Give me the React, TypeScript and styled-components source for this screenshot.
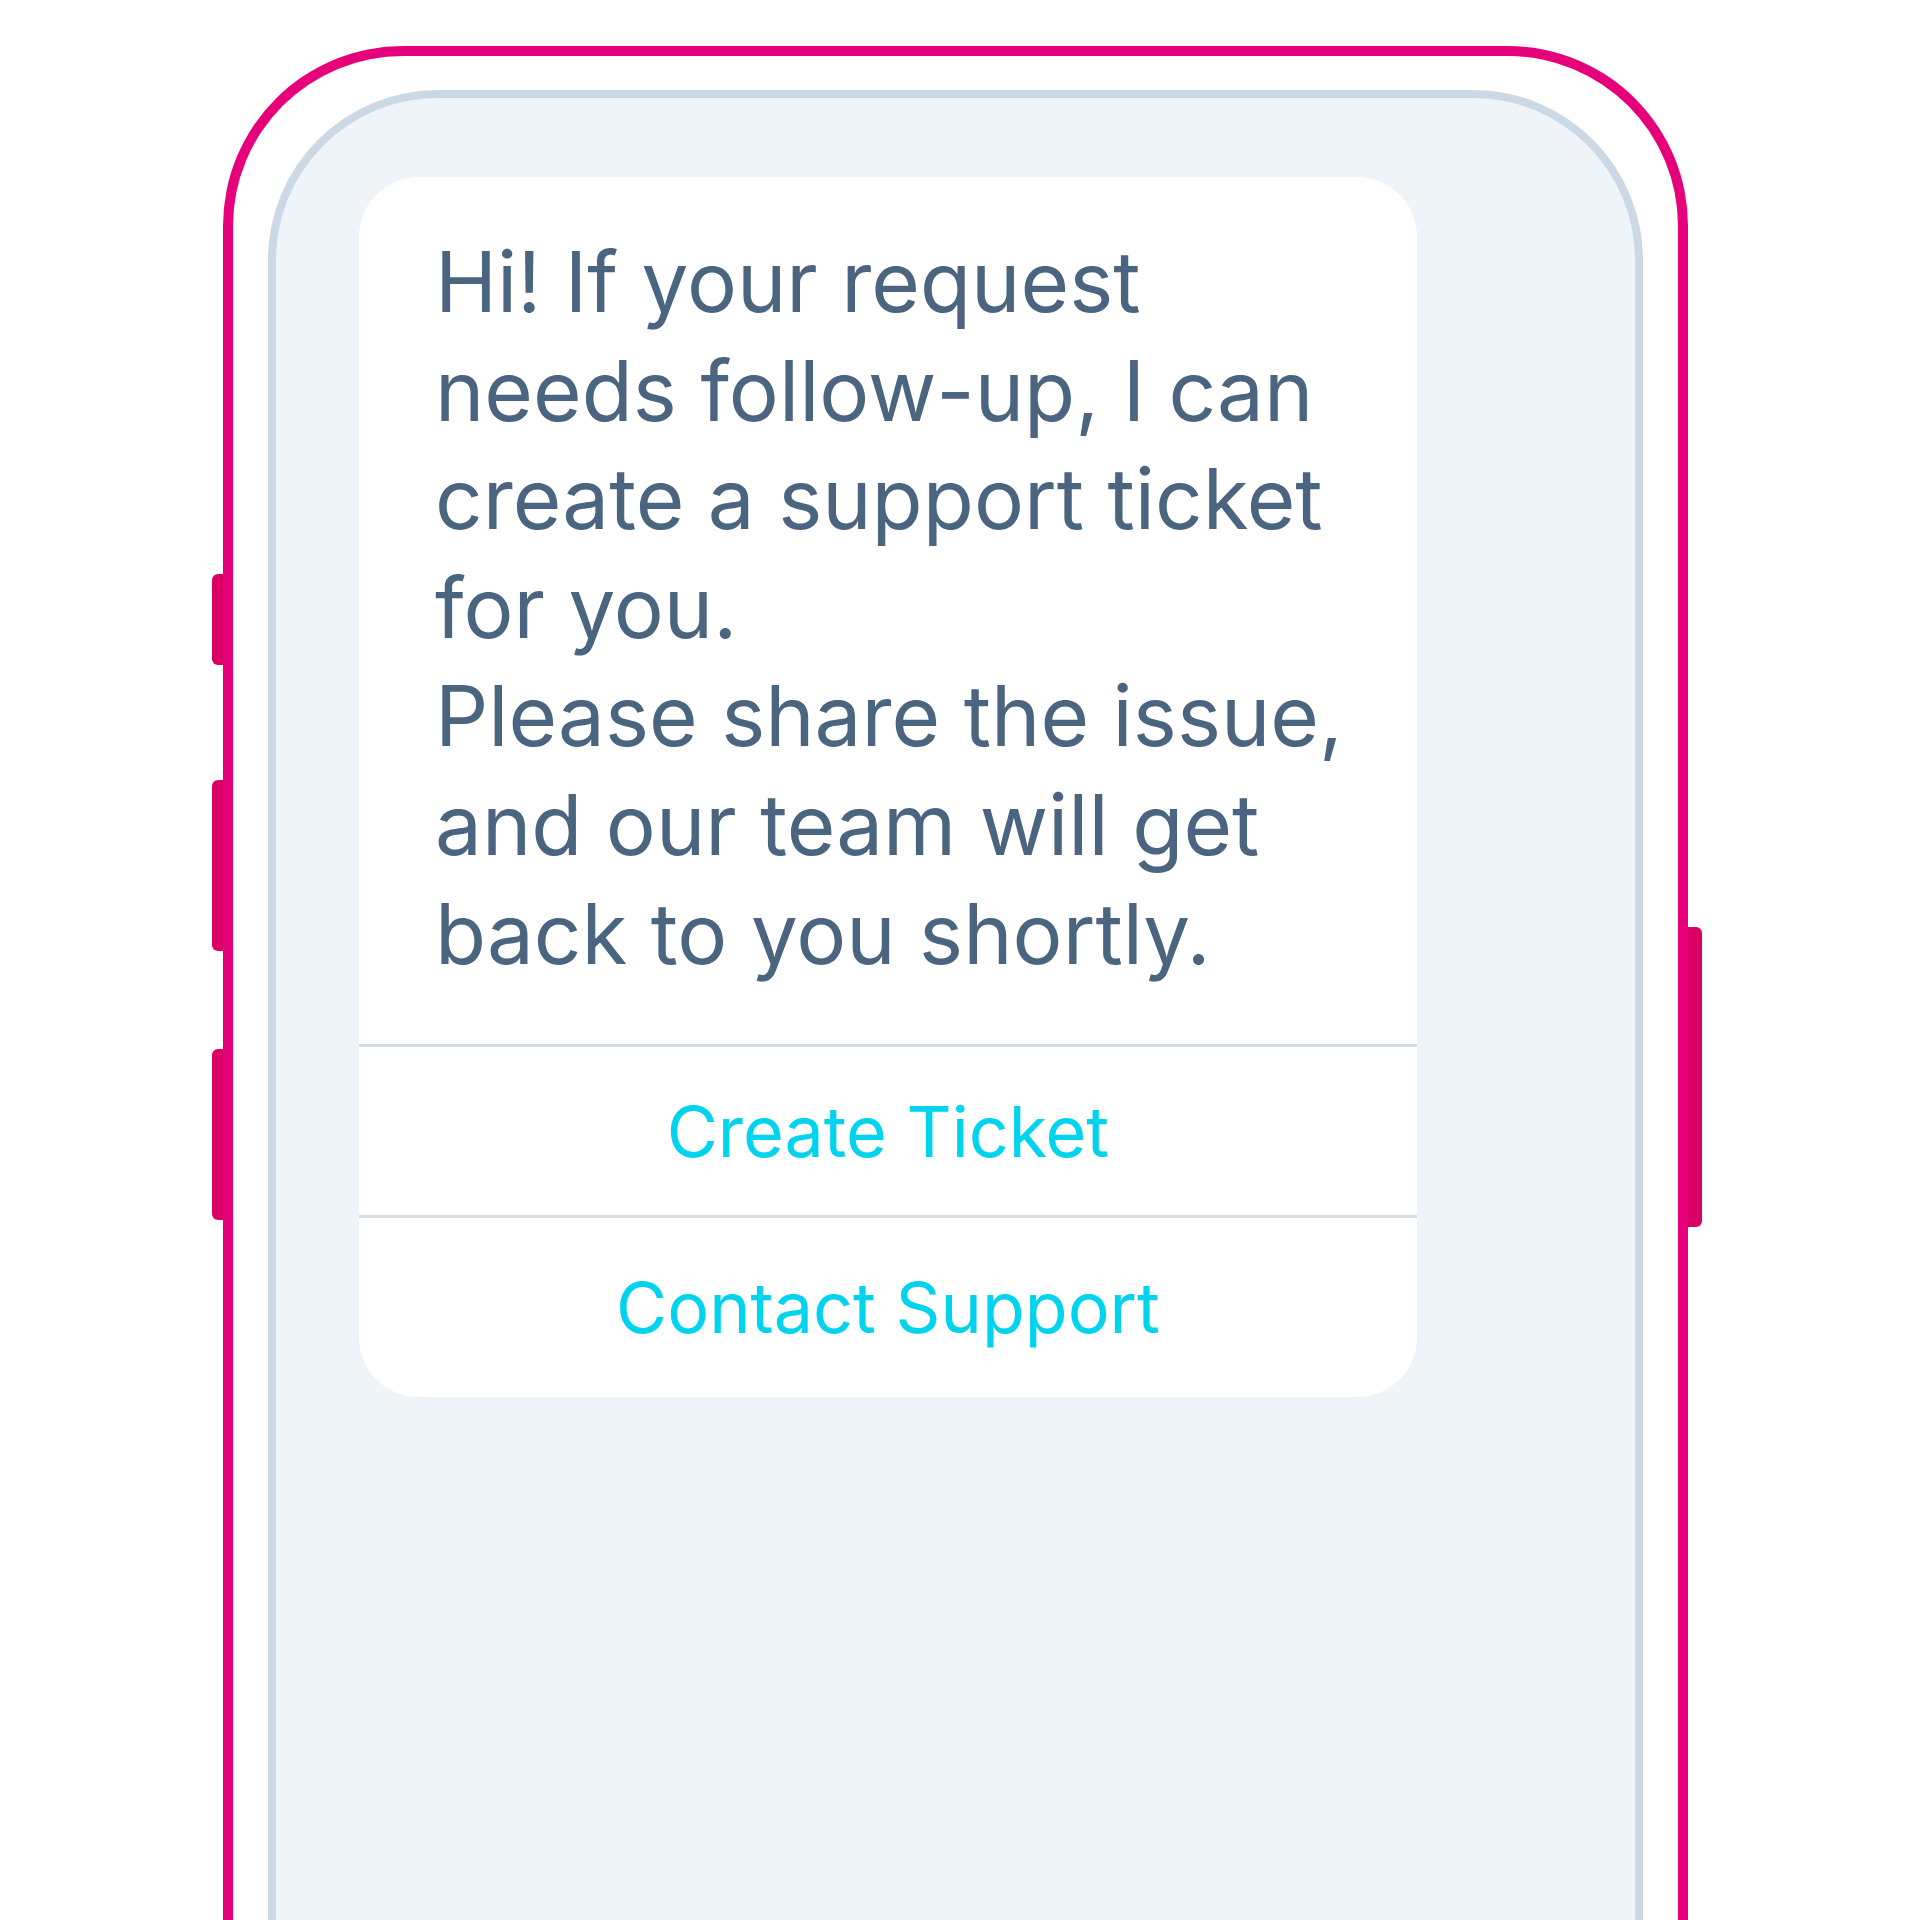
import React from "react";
import styled, { createGlobalStyle } from "styled-components";

const GlobalStyle = createGlobalStyle`
  html, body {
    margin: 0;
    padding: 0;
    background: #ffffff;
  }
  body {
    font-family: Inter, "Noto Sans", sans-serif;
    overflow: hidden;
  }
`;

const Page = styled.div`
  width: 1920px;
  height: 1920px;
  padding: 46px 0 0 223px;
  box-sizing: border-box;
  overflow: hidden;
`;

const PhoneFrame = styled.div`
  position: relative;
  width: 1465px;
  height: 1960px;
  box-sizing: border-box;
  padding: 34px 35px 0;
  border: 10px solid #e6007a;
  border-bottom: none;
  border-radius: 180px 180px 0 0;
`;

// hardware buttons sit on the outside of the frame
const SideRail = styled.div<{ $side: "left" | "right"; $top: number }>`
  position: absolute;
  top: ${(p) => p.$top}px;
  ${(p) => (p.$side === "left" ? "left: -21px;" : "right: -24px;")}
  display: flex;
  flex-direction: column;
`;

const SideButton = styled.div<{ $side: "left" | "right"; $height: number; $space?: number }>`
  height: ${(p) => p.$height}px;
  margin-top: ${(p) => p.$space ?? 0}px;
  width: ${(p) => (p.$side === "left" ? 11 : 14)}px;
  background: #da0064;
  border-radius: ${(p) => (p.$side === "left" ? "6px 0 0 6px" : "0 6px 6px 0")};
`;

const Screen = styled.div`
  height: 100%;
  box-sizing: border-box;
  padding: 79px 0 0 83px;
  background: #eff4f8;
  border: 8px solid #cbd9e4;
  border-bottom: none;
  border-radius: 170px 170px 0 0;
`;

const Card = styled.div`
  width: 1058px;
  background: #ffffff;
  border-radius: 60px;
  overflow: hidden;
  display: flex;
  flex-direction: column;
`;

const Message = styled.div`
  padding: 51px 40px 56px 76px;
  color: #4b6581;
  font-size: 83.5px;
  line-height: 108.6px;
  font-weight: 400;
`;

const ActionButton = styled.button<{ $height: number }>`
  height: ${(p) => p.$height}px;
  border: none;
  border-top: 3px solid #d3dde6;
  background: transparent;
  color: #00d3ee;
  font-family: Inter, "Noto Sans", sans-serif;
  font-size: 70px;
  font-weight: 400;
  cursor: pointer;
  padding: 0;
`;

export default function App() {
  return (
    <>
      <GlobalStyle />
      <Page>
        <PhoneFrame>
          <SideRail $side="left" $top={518}>
            <SideButton $side="left" $height={91} />
            <SideButton $side="left" $height={171} $space={115} />
            <SideButton $side="left" $height={171} $space={98} />
          </SideRail>
          <SideRail $side="right" $top={871}>
            <SideButton $side="right" $height={300} />
          </SideRail>
          <Screen>
            <Card>
              <Message>
                Hi! If your request needs follow-up, I can create a support ticket for you.
                <br />
                Please share the issue, and our team will get back to you shortly.
              </Message>
              <ActionButton $height={171}>Create Ticket</ActionButton>
              <ActionButton $height={182}>Contact Support</ActionButton>
            </Card>
          </Screen>
        </PhoneFrame>
      </Page>
    </>
  );
}
